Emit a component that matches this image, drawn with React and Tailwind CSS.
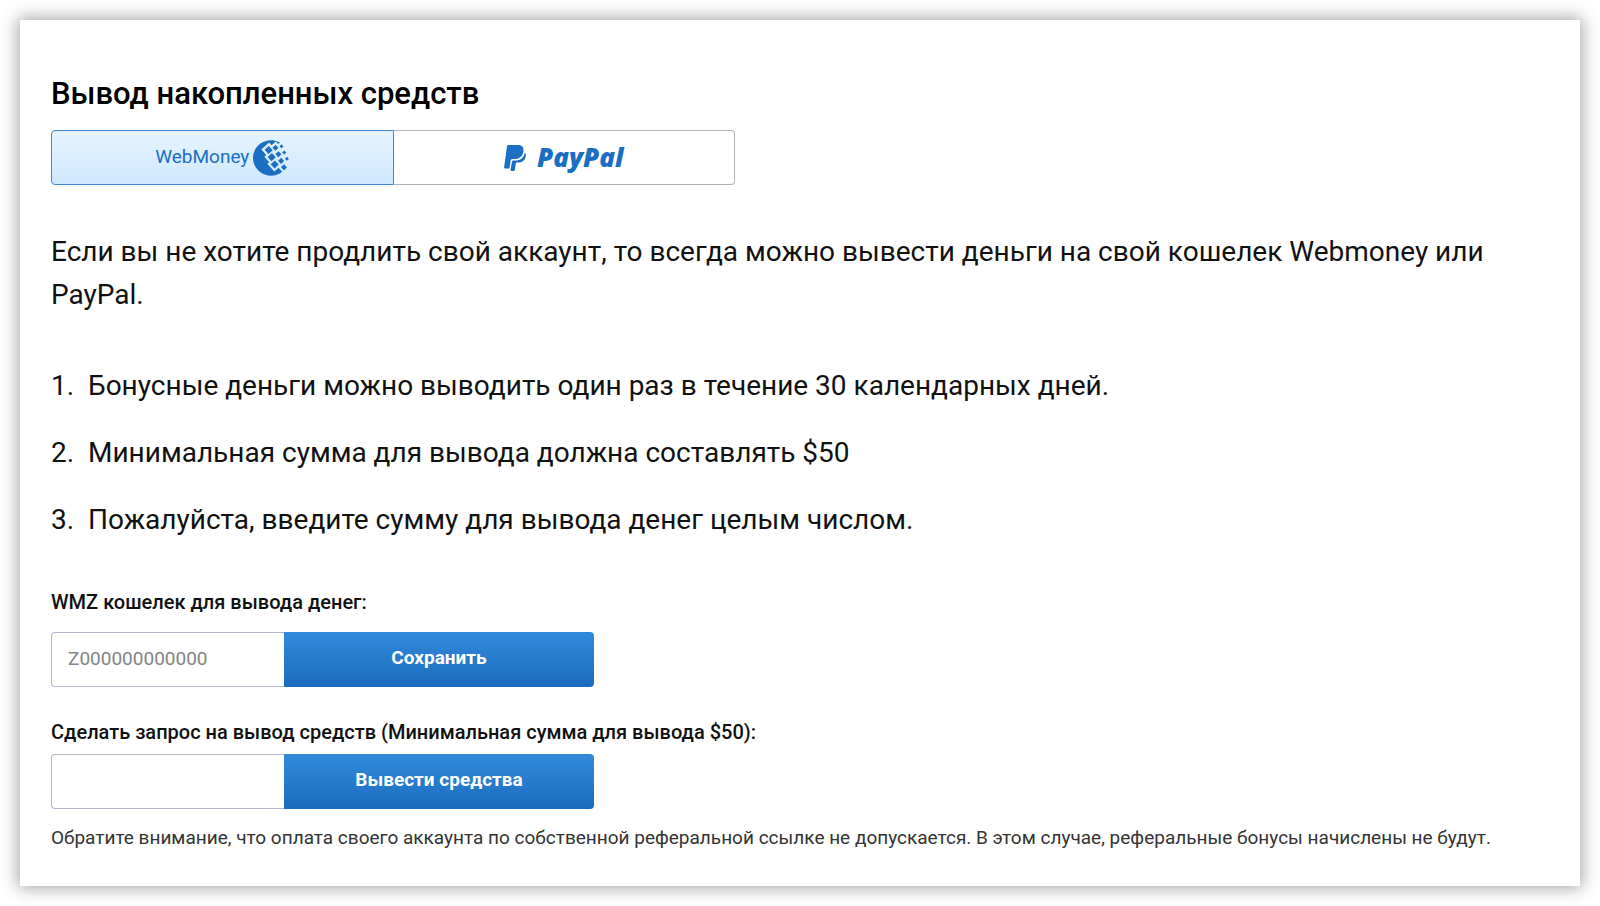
import { useState } from "react";
import { SiWebmoney } from "react-icons/si";

const rules = [
  "Бонусные деньги можно выводить один раз в течение 30 календарных дней.",
  "Минимальная сумма для вывода должна составлять $50",
  "Пожалуйста, введите сумму для вывода денег целым числом.",
];

function PaypalMark() {
  return (
    <svg className="h-[26px] w-[22px]" viewBox="0 0 22 26" fill="currentColor" aria-hidden="true">
      <path d="M4 0H13.8c4.1 0 6.3 2.4 5.6 6.4C18.5 11.8 15 14 10.4 14H8.5c-1 0-1.7.6-1.9 1.6L5.5 23.5H.9C.3 23.5 0 23.2.1 22.5L3 1C3.1.4 3.5 0 4 0z" />
      <path d="M20.8 7.4c1 1 1.2 2.5.9 4.1-.8 4.3-3.8 6-7.8 6h-.8c-.7 0-1.2.5-1.3 1.1l-1 6.4c-.1.6-.5 1-1.1 1H7.2c-.5 0-.8-.4-.7-.9L8 16.4c.1-.6.6-1 1.2-1h1.9c5.1 0 8.6-2.2 9.7-8z" />
    </svg>
  );
}

function FieldRow({ id, label, placeholder, button, labelClass }) {
  return (
    <form onSubmit={(e) => e.preventDefault()}>
      <label htmlFor={id} className={`block text-[20px] leading-6 font-medium ${labelClass}`}>
        {label}
      </label>
      <div className="flex h-[55px] max-w-[543px]">
        <input
          id={id}
          type="text"
          placeholder={placeholder}
          className="w-[233px] min-w-0 rounded-l border border-r-0 border-[#b3b5d2] bg-white px-4 text-[19px] placeholder:text-[#858585] outline-none"
        />
        <button
          type="submit"
          className="flex-1 rounded-r bg-linear-to-b from-[#338adc] to-[#1a6bbd] pb-0.5 text-[19px] font-bold text-white"
        >
          {button}
        </button>
      </div>
    </form>
  );
}

export default function App() {
  const [method, setMethod] = useState("webmoney");
  const active = "border-[#3f87cf] bg-linear-to-b from-[#e6f3ff] to-[#cfe8fd]";
  const idle = "border-[#b3b3b3] bg-white";

  return (
    <div className="bg-white p-5 font-[Roboto,sans-serif] text-[#111]">
      <main className="bg-white px-[31px] pt-14 pb-9 shadow-[0_0_16px_2px_rgba(0,0,0,0.36)]">
        <h1 className="text-[31px] leading-9 font-medium text-black">Вывод накопленных средств</h1>

        <div className="mt-[18px] flex h-[55px] max-w-[684px]">
          <button
            type="button"
            aria-pressed={method === "webmoney"}
            onClick={() => setMethod("webmoney")}
            className={`flex flex-1 items-center justify-center gap-1 rounded-l border text-[19px] text-[#1b6fc2] ${method === "webmoney" ? active : idle}`}
          >
            WebMoney
            <SiWebmoney className="size-9" />
          </button>
          <button
            type="button"
            aria-pressed={method === "paypal"}
            onClick={() => setMethod("paypal")}
            className={`flex flex-1 items-center justify-center gap-[11px] rounded-r border border-l-0 font-['Open_Sans',sans-serif] text-[26px] font-extrabold text-[#1b6fc2] italic ${method === "paypal" ? active : idle}`}
          >
            <PaypalMark />
            PayPal
          </button>
        </div>

        <p className="mt-[45px] text-[28px] leading-[43px]">
          Если вы не хотите продлить свой аккаунт, то всегда можно вывести деньги на свой кошелек Webmoney или PayPal.
        </p>

        <ol className="mt-12 flex flex-col gap-6 text-[28px] leading-[43px]">
          {rules.map((rule, i) => (
            <li key={rule} className="flex">
              <span className="w-[37px] shrink-0">{i + 1}.</span>
              {rule}
            </li>
          ))}
        </ol>

        <div className="mt-[49px] flex flex-col gap-[33px]">
          <FieldRow
            id="wallet"
            label="WMZ кошелек для вывода денег:"
            placeholder="Z000000000000"
            button="Сохранить"
            labelClass="mb-[18px]"
          />
          <FieldRow
            id="amount"
            label="Сделать запрос на вывод средств (Минимальная сумма для вывода $50):"
            button="Вывести средства"
            labelClass="mb-[10px]"
          />
        </div>

        <p className="mt-[17px] text-[19px] leading-6 text-[#333]">
          Обратите внимание, что оплата своего аккаунта по собственной реферальной ссылке не допускается. В этом случае,
          реферальные бонусы начислены не будут.
        </p>
      </main>
    </div>
  );
}
